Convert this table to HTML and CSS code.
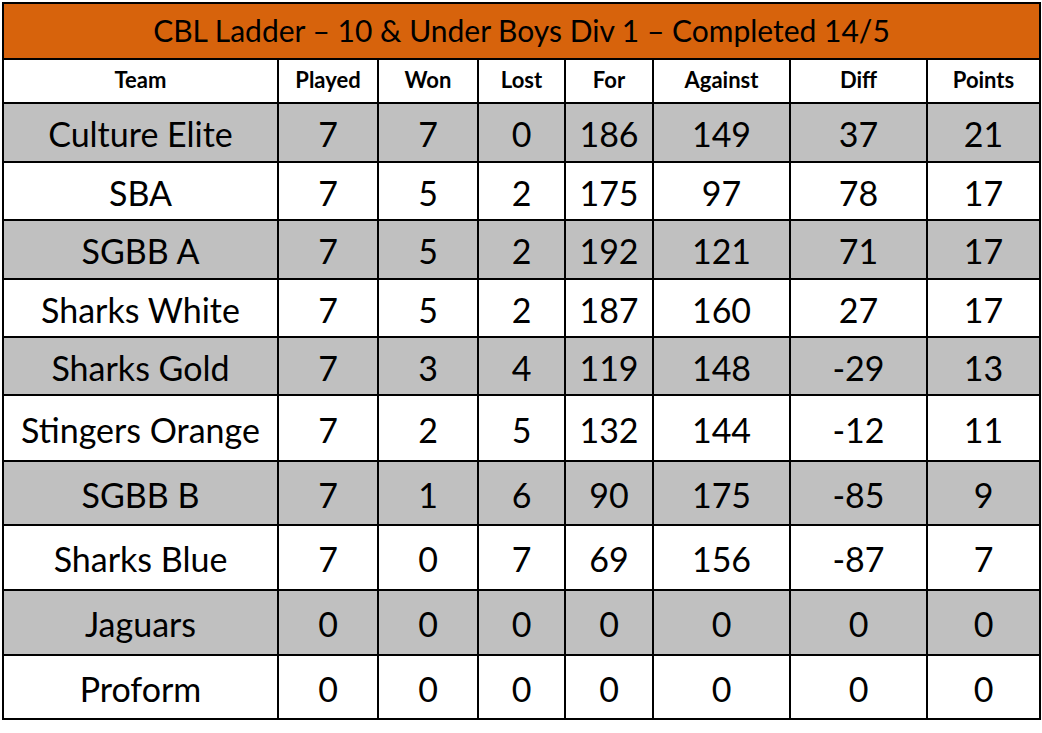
FILE: index.html
```html
<!DOCTYPE html>
<html lang="en">
<head>
    <meta charset="UTF-8">
    <title>CBL Ladder – 10 &amp; Under Boys Div 1</title>
    <link rel="stylesheet" href="styles.css">
</head>
<body>
    <table class="ladder">
        <colgroup>
            <col class="col-team">
            <col class="col-played">
            <col class="col-won">
            <col class="col-lost">
            <col class="col-for">
            <col class="col-against">
            <col class="col-diff">
            <col class="col-points">
        </colgroup>
        <thead>
            <tr class="title-row">
                <th colspan="8">CBL Ladder – 10 &amp; Under Boys Div 1 – Completed 14/5</th>
            </tr>
            <tr class="head-row">
                <th>Team</th>
                <th>Played</th>
                <th>Won</th>
                <th>Lost</th>
                <th>For</th>
                <th>Against</th>
                <th>Diff</th>
                <th>Points</th>
            </tr>
        </thead>
        <tbody>
            <tr class="shaded h59">
                <td>Culture Elite</td><td>7</td><td>7</td><td>0</td><td>186</td><td>149</td><td>37</td><td>21</td>
            </tr>
            <tr class="h58">
                <td>SBA</td><td>7</td><td>5</td><td>2</td><td>175</td><td>97</td><td>78</td><td>17</td>
            </tr>
            <tr class="shaded h59">
                <td>SGBB A</td><td>7</td><td>5</td><td>2</td><td>192</td><td>121</td><td>71</td><td>17</td>
            </tr>
            <tr class="h58">
                <td>Sharks White</td><td>7</td><td>5</td><td>2</td><td>187</td><td>160</td><td>27</td><td>17</td>
            </tr>
            <tr class="shaded h58">
                <td>Sharks Gold</td><td>7</td><td>3</td><td>4</td><td>119</td><td>148</td><td>-29</td><td>13</td>
            </tr>
            <tr class="h66">
                <td>Stingers Orange</td><td>7</td><td>2</td><td>5</td><td>132</td><td>144</td><td>-12</td><td>11</td>
            </tr>
            <tr class="shaded h64">
                <td>SGBB B</td><td>7</td><td>1</td><td>6</td><td>90</td><td>175</td><td>-85</td><td>9</td>
            </tr>
            <tr class="h65">
                <td>Sharks Blue</td><td>7</td><td>0</td><td>7</td><td>69</td><td>156</td><td>-87</td><td>7</td>
            </tr>
            <tr class="shaded h65">
                <td>Jaguars</td><td>0</td><td>0</td><td>0</td><td>0</td><td>0</td><td>0</td><td>0</td>
            </tr>
            <tr class="h64">
                <td>Proform</td><td>0</td><td>0</td><td>0</td><td>0</td><td>0</td><td>0</td><td>0</td>
            </tr>
        </tbody>
    </table>
</body>
</html>
```

FILE: styles.css
```css
:root {
    --orange: #d7630c;
    --shade: #c0c0c0;
    --line: #000000;
}

body {
    margin: 0;
    padding: 2px 0 0 2px;
    background: #ffffff;
    font-family: Lato, "Open Sans", sans-serif;
    color: #000000;
}

.ladder {
    border-collapse: collapse;
    table-layout: fixed;
    width: 1037px;
}

.ladder th,
.ladder td {
    border: 2px solid var(--line);
    padding: 2px 0 0;
    text-align: center;
    vertical-align: middle;
    white-space: nowrap;
    overflow: hidden;
}

.col-team { width: 275px; }
.col-played { width: 100px; }
.col-won { width: 100px; }
.col-lost { width: 87px; }
.col-for { width: 88px; }
.col-against { width: 137px; }
.col-diff { width: 137px; }
.col-points { width: 113px; }

.title-row {
    height: 56px;
}

.title-row th {
    background: var(--orange);
    font-size: 30px;
    font-weight: 400;
    padding: 0 0 3px;
}

.head-row {
    height: 44px;
}

.head-row th {
    font-size: 22px;
    font-weight: 700;
    padding: 0 0 3px;
}

.ladder td {
    font-size: 34px;
}

.shaded td {
    background: var(--shade);
}

.h58 { height: 58px; }
.h59 { height: 59px; }
.h64 { height: 64px; }
.h65 { height: 65px; }
.h66 { height: 66px; }
```
